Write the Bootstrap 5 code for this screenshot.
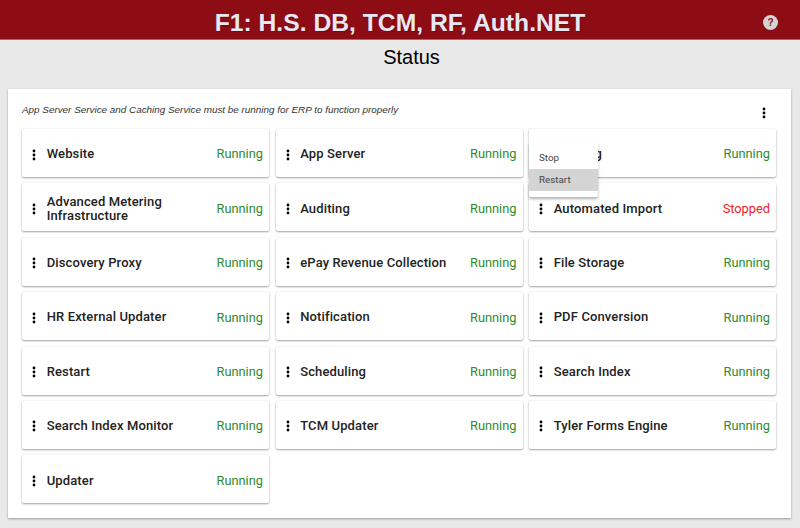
<!DOCTYPE html>
<html lang="en"><head><meta charset="utf-8"><title>Status</title>
<link href="https://cdn.jsdelivr.net/npm/bootstrap@5.3.0/dist/css/bootstrap.min.css" rel="stylesheet">
<style>
html,body{height:528px;overflow:hidden}
body{background:#e9e9e9;font-family:"Liberation Sans",Arial,sans-serif;color:#000}
.top-bar{height:40px;background:#8e0c14;border-bottom:1px solid #b5606a;color:#e8e8f4;position:relative}
.top-title{font-size:24.7px;font-weight:700;line-height:46px;height:39px;margin:0;text-shadow:1px 1px 1px rgba(0,0,0,.2)}
.help-btn{position:absolute;left:763px;top:15px;width:15px;height:15px;border-radius:50%;background:#d4d4d4;color:#8e0c14;font-size:10px;font-weight:700;line-height:15px;text-align:center}
.page-head{font-size:20px;line-height:24px;height:49px;padding-top:5px;padding-left:23px;font-weight:400;margin:0;text-align:center}
.panel-box{margin:0 9px 0 8px;height:429px;background:#fff;box-shadow:0 1px 2px rgba(0,0,0,.35);padding:0 14px;position:relative}
.note-row{height:40px;padding-top:13.5px;padding-right:11px}
.note-text{font-size:9.9px;font-style:italic;color:#333;line-height:13px}
.dots{display:block;flex:none;width:4px;height:12px}
.dots circle{fill:#2b2b2b}
.note-row .dots{margin-top:4.5px}
.svc-grid{display:grid;grid-template-columns:repeat(3,247px);column-gap:6.5px;row-gap:6.4px}
.svc-card{height:48px;background:#fff;border-radius:2px;box-shadow:0 1px 2px rgba(0,0,0,.35),0 0 3px rgba(0,0,0,.07);padding:1px 6px 0 10px;position:relative}
.svc-card .dots{margin-top:2px}
.svc-name{font-family:Roboto,sans-serif;font-weight:500;font-size:13px;line-height:14px;letter-spacing:.13px;color:#222;margin-left:10.7px;margin-top:1.6px}
.svc-state{font-size:12.8px;font-family:Roboto,sans-serif;color:#2e8b2e;margin-left:auto;margin-top:1px;flex:none}
.svc-state.is-stopped{color:#f0202a}
.svc-menu{position:absolute;left:0;top:13px;width:69px;z-index:5;background:#fff;padding:5px 0 6px;border-radius:2px;box-shadow:0 2px 3px rgba(0,0,0,.3);font-size:9.8px;font-family:Roboto,sans-serif;color:#444}
.svc-menu div{height:22px;line-height:22px;padding-left:10px}
.svc-menu .hot{background:#d4d4d4}
</style></head><body>
<svg width="0" height="0" class="d-block position-absolute"><symbol id="kebab" viewBox="0 0 4 12"><circle cx="2" cy="2" r="1.4"/><circle cx="2" cy="6" r="1.4"/><circle cx="2" cy="10" r="1.4"/></symbol></svg>
<header class="top-bar text-center"><h1 class="top-title">F1: H.S. DB, TCM, RF, Auth.NET</h1><span class="help-btn">?</span></header>
<h2 class="page-head">Status</h2>
<main class="panel-box">
<div class="note-row d-flex justify-content-between align-items-start"><span class="note-text">App Server Service and Caching Service must be running for ERP to function properly</span><svg class="dots"><use href="#kebab"/></svg></div>
<div class="svc-grid">
<div class="svc-card d-flex align-items-center"><svg class="dots"><use href="#kebab"/></svg><span class="svc-name">Website</span><span class="svc-state">Running</span></div>
<div class="svc-card d-flex align-items-center"><svg class="dots"><use href="#kebab"/></svg><span class="svc-name">App Server</span><span class="svc-state">Running</span></div>
<div class="svc-card d-flex align-items-center"><svg class="dots"><use href="#kebab"/></svg><span class="svc-name">Caching</span><span class="svc-state">Running</span><div class="svc-menu"><div>Stop</div><div class="hot">Restart</div></div></div>
<div class="svc-card d-flex align-items-center"><svg class="dots"><use href="#kebab"/></svg><span class="svc-name">Advanced Metering<br>Infrastructure</span><span class="svc-state">Running</span></div>
<div class="svc-card d-flex align-items-center"><svg class="dots"><use href="#kebab"/></svg><span class="svc-name">Auditing</span><span class="svc-state">Running</span></div>
<div class="svc-card d-flex align-items-center"><svg class="dots"><use href="#kebab"/></svg><span class="svc-name">Automated Import</span><span class="svc-state is-stopped">Stopped</span></div>
<div class="svc-card d-flex align-items-center"><svg class="dots"><use href="#kebab"/></svg><span class="svc-name">Discovery Proxy</span><span class="svc-state">Running</span></div>
<div class="svc-card d-flex align-items-center"><svg class="dots"><use href="#kebab"/></svg><span class="svc-name">ePay Revenue Collection</span><span class="svc-state">Running</span></div>
<div class="svc-card d-flex align-items-center"><svg class="dots"><use href="#kebab"/></svg><span class="svc-name">File Storage</span><span class="svc-state">Running</span></div>
<div class="svc-card d-flex align-items-center"><svg class="dots"><use href="#kebab"/></svg><span class="svc-name">HR External Updater</span><span class="svc-state">Running</span></div>
<div class="svc-card d-flex align-items-center"><svg class="dots"><use href="#kebab"/></svg><span class="svc-name">Notification</span><span class="svc-state">Running</span></div>
<div class="svc-card d-flex align-items-center"><svg class="dots"><use href="#kebab"/></svg><span class="svc-name">PDF Conversion</span><span class="svc-state">Running</span></div>
<div class="svc-card d-flex align-items-center"><svg class="dots"><use href="#kebab"/></svg><span class="svc-name">Restart</span><span class="svc-state">Running</span></div>
<div class="svc-card d-flex align-items-center"><svg class="dots"><use href="#kebab"/></svg><span class="svc-name">Scheduling</span><span class="svc-state">Running</span></div>
<div class="svc-card d-flex align-items-center"><svg class="dots"><use href="#kebab"/></svg><span class="svc-name">Search Index</span><span class="svc-state">Running</span></div>
<div class="svc-card d-flex align-items-center"><svg class="dots"><use href="#kebab"/></svg><span class="svc-name">Search Index Monitor</span><span class="svc-state">Running</span></div>
<div class="svc-card d-flex align-items-center"><svg class="dots"><use href="#kebab"/></svg><span class="svc-name">TCM Updater</span><span class="svc-state">Running</span></div>
<div class="svc-card d-flex align-items-center"><svg class="dots"><use href="#kebab"/></svg><span class="svc-name">Tyler Forms Engine</span><span class="svc-state">Running</span></div>
<div class="svc-card d-flex align-items-center"><svg class="dots"><use href="#kebab"/></svg><span class="svc-name">Updater</span><span class="svc-state">Running</span></div>
</div>
</main>
<script src="https://cdn.jsdelivr.net/npm/bootstrap@5.3.0/dist/js/bootstrap.bundle.min.js"></script>
</body></html>
